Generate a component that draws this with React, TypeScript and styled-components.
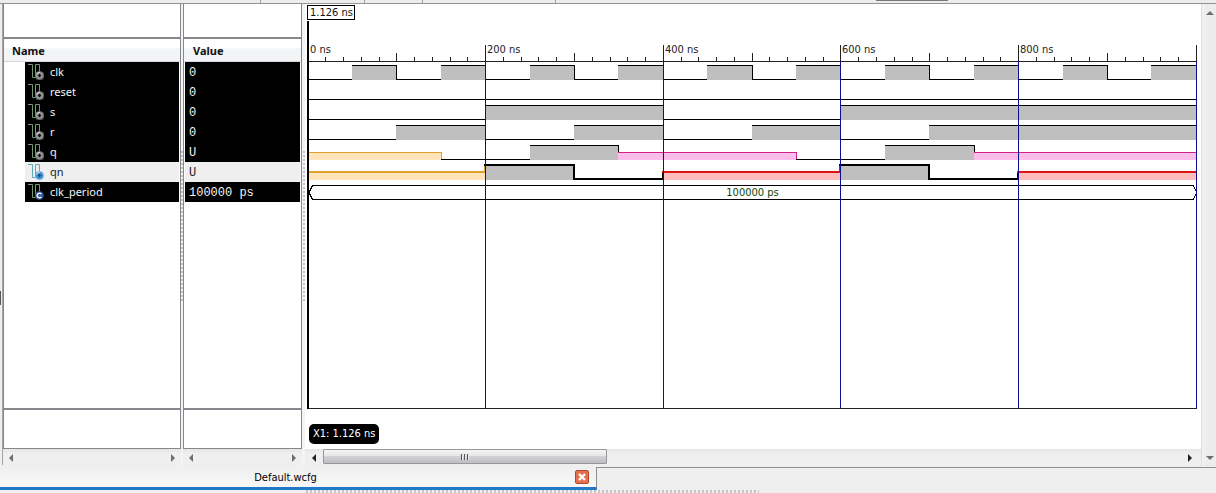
import React, { useLayoutEffect, useRef, useState } from "react";
import styled, { createGlobalStyle } from "styled-components";

const UI = `"Noto Sans", "Open Sans", sans-serif`;
const TAHOMA = `"DejaVu Sans Condensed", "Noto Sans", sans-serif`;
const MONO = `"Liberation Mono", monospace`;
const FRAME = "#86878c";

const Global = createGlobalStyle`
  * { box-sizing: border-box; }
  body { margin: 0; background: #efefef; font: 11px/14px ${UI}; color: #111; }
  button { font: inherit; padding: 0; border: 0; background: none; }
`;

const Page = styled.div`
  display: flex;
  flex-direction: column;
  height: 100vh;
  min-height: 400px;
  overflow: hidden;
`;

const ToolbarEdge = styled.div`
  display: flex;
  flex: none;
  height: 4px;
  background: #ececec;
  border-bottom: 1px solid #939396;
`;

const ToolbarGroup = styled.div<{ $width: number }>`
  width: ${(p) => p.$width}px;
  border-right: 1px solid #a3a3a6;
`;

const ToolbarShadow = styled.div`
  width: 72px;
  height: 1px;
  margin-left: 320px;
  background: #77777a;
`;

const Main = styled.main`
  display: flex;
  flex: 1;
  min-height: 0;
  padding-bottom: 1px;
`;

const Gutter = styled.div`
  display: flex;
  align-items: center;
  flex: none;
  width: 3px;
  margin-bottom: 1px;
  padding-top: 126px;
  border-right: 1px solid #a2a2a5;
`;

const GutterMark = styled.div`
  width: 1px;
  height: 14px;
  background: #555;
`;

const Splitter = styled.div<{ $width: number }>`
  display: flex;
  flex: none;
  align-items: center;
  justify-content: flex-end;
  width: ${(p) => p.$width}px;
  padding-bottom: 16px;
  background: #f4f4f4;

  &::after {
    content: "";
    width: 2px;
    height: 152px;
    background: repeating-linear-gradient(#c4c4c4 0 2px, #f4f4f4 2px 4px);
  }
`;

const Column = styled.section<{ $width: number }>`
  display: flex;
  flex: none;
  flex-direction: column;
  width: ${(p) => p.$width}px;
`;

const Spacer = styled.div<{ $height: number; $place: "top" | "bottom" }>`
  flex: none;
  height: ${(p) => p.$height}px;
  background: #fff;
  border: solid ${FRAME};
  border-width: ${(p) => (p.$place === "top" ? "0 1px 2px" : "1px")};
`;

const List = styled.div`
  flex: 1;
  min-height: 0;
  background: #fff;
  border: solid ${FRAME};
  border-width: 0 1px 1px;
`;

const Table = styled.table`
  width: 100%;
  table-layout: fixed;
  border-spacing: 0;
`;

const HeadCell = styled.th<{ $indent: number }>`
  height: 23px;
  padding: 2px 0 0 ${(p) => p.$indent}px;
  text-align: left;
  font-weight: 700;
  background: linear-gradient(#fff 0 40%, #f3f4f6 45% 100%);
  border-bottom: 1px solid #d6d7da;
`;

const Cell = styled.td<{ $indent: number }>`
  height: 20px;
  padding: 0 1px 0 ${(p) => p.$indent}px;
`;

const Signal = styled.div<{ $selected: boolean; $mono?: boolean }>`
  display: flex;
  align-items: center;
  gap: 6px;
  height: 20px;
  padding: ${(p) => (p.$mono ? "2px 0 0 4px" : "0 0 0 3px")};
  font: ${(p) => (p.$mono ? `12px/18px ${MONO}` : `11px/20px ${UI}`)};
  white-space: nowrap;
  color: ${(p) => (p.$selected ? "#1a1a22" : "#f4f4f4")};
  background: ${(p) => (p.$selected ? "#efefef" : "#000")};
`;

const Scroll = styled.div`
  display: flex;
  flex: none;
  align-items: center;
  height: 17px;
  background: linear-gradient(#e6e6e6, #efefef 30%);
`;

const Track = styled.div`
  flex: 1;
  height: 100%;
`;

const Thumb = styled.div`
  display: flex;
  align-items: center;
  justify-content: center;
  gap: 1px;
  width: 33%;
  height: 15px;
  margin-left: 1px;
  border: 1px solid #98989c;
  border-radius: 1px;
  background: linear-gradient(#f5f5f5, #e6e6e7 45%, #d2d2d5 50%, #bebec2);
`;

const Grip = styled.span`
  width: 2px;
  height: 6px;
  background: linear-gradient(90deg, #55555a 50%, #e8e8e8 50%);
`;

const ArrowButton = styled.button`
  display: flex;
  align-items: center;
  justify-content: center;
  flex: none;
  width: 16px;
  height: 17px;
`;

const Viewer = styled.section`
  display: flex;
  flex: 1;
  flex-direction: column;
  min-width: 0;
`;

const ViewerScroll = styled(Scroll)`
  padding: 0 3px 0 1px;
`;

const Canvas = styled.div`
  display: flex;
  flex: 1;
  flex-direction: column;
  min-height: 0;
  align-items: flex-start;
  background: #fff;
`;

const CursorTime = styled.div`
  height: 15px;
  margin: 1px 0 0 2px;
  padding: 0 1px 0 2px;
  border: 1px solid #000;
  font: 11px/13px ${TAHOMA};
  white-space: nowrap;
`;

const Chart = styled.svg`
  display: block;
  flex: 1 1 0;
  width: 100%;
  min-height: 200px;
  font: 11px ${TAHOMA};
`;

const Footer = styled.div`
  flex: none;
  height: 40px;
  padding: 15px 0 0 4px;
`;

const CursorPill = styled.div`
  height: 20px;
  padding: 0 4px;
  border-radius: 5px;
  background: #000;
  color: #fff;
  font: 11px/20px ${TAHOMA};
  white-space: nowrap;
`;

const VScroll = styled.div`
  display: flex;
  flex: none;
  flex-direction: column;
  justify-content: space-between;
  width: 15px;
  border-left: 1px solid #dedede;
  background: linear-gradient(90deg, #f2f2f2, #ececec 40%);
`;

const TabBar = styled.footer`
  display: flex;
  flex: none;
  flex-direction: column;
  height: 26px;
`;

const TabRow = styled.div`
  display: flex;
`;

const Tab = styled.div`
  display: flex;
  align-items: center;
  width: 597px;
  height: 23px;
  padding-right: 7px;
  border-right: 1px solid #8e8e92;
  border-bottom: 3px solid #1f78c9;
  background: linear-gradient(#efefef, #f8f8f8);
`;

const TabLabel = styled.button`
  flex: 1;
  height: 20px;
  padding: 1px 4px 0 0;
  font: 11px/20px ${TAHOMA};
  text-align: center;
`;

const TabRest = styled.div`
  flex: 1;
  border-top: 1px solid #8e8e92;
`;

const Close = styled.button`
  display: block;
  width: 14px;
  height: 14px;
`;

const DotStrip = styled.div`
  width: 453px;
  height: 3px;
  margin-left: 306px;
  background: repeating-linear-gradient(90deg, #c6c6c6 0 2px, #f0f0f0 2px 4px);
`;

type Dir = "left" | "right" | "up" | "down";
const ARROWS: Record<Dir, string> = {
  left: "M6 0v8L2 4z",
  right: "M2 0v8l4-4z",
  up: "M0 6h8L4 2z",
  down: "M0 2h8L4 6z",
};

function Arrow({ dir, color = "#6e6e72" }: { dir: Dir; color?: string }) {
  return (
    <ArrowButton aria-label={`Scroll ${dir}`}>
      <svg width="8" height="8" viewBox="0 0 8 8">
        <path d={ARROWS[dir]} fill={color} />
      </svg>
    </ArrowButton>
  );
}

type Kind = "port" | "selected" | "constant";

function SignalIcon({ kind }: { kind: Kind }) {
  const wave = kind === "selected" ? "#5fa9bd" : "#719a70";
  const disc = kind === "port" ? "#9a9a9a" : kind === "selected" ? "#3f8fd0" : "#3c5fa5";
  const rim = kind === "port" ? "#666869" : kind === "selected" ? "#7ab8e6" : "#26407c";
  return (
    <svg width="16" height="16" viewBox="0 0 16 16" aria-hidden="true">
      <path d="M0 .5h4.500v13h3V.5h4V7" fill="none" stroke={wave} />
      {kind === "port" && <path d="M8 8h7.500v7.500H8z" fill="#4b4b4b" />}
      <circle cx="11.500" cy="11.500" r="4" fill={disc} stroke={rim} />
      {kind === "constant" ? (
        <path d="M13.400 10a2.400 2.400 0 1 0 0 3" fill="none" stroke="#fff" strokeWidth="1.300" />
      ) : (
        <>
          <path d="M8.800 10.500a3 3 0 0 1 3-2.200" fill="none" stroke="#d8e4ea" />
          <path
            d="M11.500 9.800v3.400M9.800 11.500h3.400"
            stroke={kind === "selected" ? "#164f8c" : "#111"}
            strokeWidth="1.400"
          />
        </>
      )}
    </svg>
  );
}

const SIGNALS: { name: string; value: string; kind: Kind }[] = [
  { name: "clk", value: "0", kind: "port" },
  { name: "reset", value: "0", kind: "port" },
  { name: "s", value: "0", kind: "port" },
  { name: "r", value: "0", kind: "port" },
  { name: "q", value: "U", kind: "port" },
  { name: "qn", value: "U", kind: "selected" },
  { name: "clk_period", value: "100000 ps", kind: "constant" },
];

type Level = "0" | "1" | "U" | "X" | "R";
// Each step is [start time in ns, level]; it lasts until the next one.
type Trace = [number, Level][];

const TRACES: { steps: Trace; thick?: boolean }[] = [
  { steps: Array.from({ length: 20 }, (_, i) => [i * 50, i % 2 ? "1" : "0"] as [number, Level]) },
  { steps: [[0, "0"]] },
  { steps: [[0, "0"], [200, "1"], [400, "0"], [600, "1"]] },
  { steps: [[0, "0"], [100, "1"], [200, "0"], [300, "1"], [400, "0"], [500, "1"], [600, "0"], [700, "1"]] },
  { steps: [[0, "U"], [150, "0"], [250, "1"], [350, "X"], [550, "0"], [650, "1"], [750, "X"]] },
  { thick: true, steps: [[0, "U"], [200, "1"], [300, "0"], [400, "R"], [600, "1"], [700, "0"], [800, "R"]] },
];

const LOOK: Record<Level, { line: string; fill: string; drop: number }> = {
  "0": { line: "#000", fill: "none", drop: 14 },
  "1": { line: "#000", fill: "#bfbfbf", drop: 0 },
  U: { line: "#dfa02c", fill: "#ffe4b9", drop: 7 },
  X: { line: "#d0208c", fill: "#fdbdea", drop: 7 },
  R: { line: "#dc1414", fill: "#ffbcbc", drop: 7 },
};

const ROW = 20;
const AXIS = 41;
const FIRST = 45;

function WaveChart() {
  const ref = useRef<SVGSVGElement>(null);
  const [size, setSize] = useState({ w: 896, h: 389 });

  useLayoutEffect(() => {
    const el = ref.current;
    if (!el) return;
    const measure = () => {
      const r = el.getBoundingClientRect();
      setSize({ w: Math.round(r.width), h: Math.round(r.height) });
    };
    measure();
    const watch = new ResizeObserver(measure);
    watch.observe(el);
    return () => watch.disconnect();
  }, []);

  const at = (t: number) => Math.round(2.5 + (t * (size.w - 7.7)) / 1000);
  const end = at(1000);
  const bottom = size.h - 1;
  const busTop = FIRST + 6 * ROW;

  return (
    <Chart ref={ref} shapeRendering="crispEdges" role="img" aria-label="Signal waveforms">
      {TRACES.map(({ steps, thick }, row) => {
        const top = FIRST + row * ROW;
        const t = thick ? 2 : 1;
        const lift = t - 1;
        return (
          <g key={row}>
            {steps.map(([start, level], i) => {
              const x0 = at(start);
              const next = steps[i + 1];
              const x1 = next ? at(next[0]) : end;
              const { line, fill, drop } = LOOK[level];
              const y = top + drop - lift;
              const nextY = next ? top + LOOK[next[1]].drop - lift : y;
              const left = i === 0 ? x0 : x0 - lift;
              return (
                <g key={start}>
                  {fill !== "none" && (
                    <rect x={x0} y={y} width={x1 - x0} height={top + 15 - y} fill={fill} />
                  )}
                  <rect x={left} y={y} width={x1 + 1 - left} height={t} fill={line} />
                  {next && (
                    <rect
                      x={x1 - lift}
                      y={Math.min(y, nextY)}
                      width={t}
                      height={Math.abs(nextY - y) + t}
                      fill={line}
                    />
                  )}
                </g>
              );
            })}
          </g>
        );
      })}

      <path
        d={`M7.500 ${busTop + 0.5}H${end - 2.5}L${end + 0.5} ${busTop + 7.5}L${end - 2.5} ${busTop + 14.5}H7.500L4 ${busTop + 7.5}z`}
        fill="none"
        stroke="#000"
      />
      <text x={(end + 4) / 2} y={busTop + 11} textAnchor="middle" fill="#0c480c">
        100000 ps
      </text>

      {Array.from({ length: 50 }, (_, i) => (i + 1) * 20).map((t) => {
        const len = t % 200 === 0 ? 16 : t % 100 === 0 ? 8 : 4;
        return <rect key={t} x={at(t)} y={AXIS - len} width="1" height={len} fill="#222" />;
      })}
      <rect x="3" y={AXIS} width={end - 2} height="1" fill="#222" />
      <rect x="3" y={bottom} width={end - 2} height="1" fill="#222" />
      {[200, 400, 600, 800, 1000].map((t) => (
        <rect key={t} x={at(t)} y={AXIS} width="1" height={bottom - AXIS} fill="#0d0d94" />
      ))}
      {[0, 200, 400, 600, 800].map((t) => (
        <text key={t} x={at(t) + 2} y="33" fill="#222">
          {t} ns
        </text>
      ))}
      <rect x="2" y="1" width="2" height={bottom} fill="#000" />
    </Chart>
  );
}

function ListColumn({ title, width }: { title: "Name" | "Value"; width: number }) {
  const isName = title === "Name";
  return (
    <Column $width={width}>
      <Spacer $height={35} $place="top" />
      <List>
        <Table>
          <thead>
            <tr>
              <HeadCell $indent={isName ? 8 : 9} scope="col">{title}</HeadCell>
            </tr>
          </thead>
          <tbody>
            {SIGNALS.map((s) => (
              <tr key={s.name}>
                <Cell $indent={isName ? 21 : 1}>
                  <Signal $selected={s.kind === "selected"} $mono={!isName}>
                    {isName && <SignalIcon kind={s.kind} />}
                    {isName ? s.name : s.value}
                  </Signal>
                </Cell>
              </tr>
            ))}
          </tbody>
        </Table>
      </List>
      <Spacer $height={40} $place="bottom" />
      <Scroll>
        <Arrow dir="left" />
        <Track />
        <Arrow dir="right" />
      </Scroll>
    </Column>
  );
}

export default function App() {
  return (
    <Page>
      <Global />
      <ToolbarEdge>
        <ToolbarGroup $width={261} />
        <ToolbarGroup $width={104} />
        <ToolbarGroup $width={58} />
        <ToolbarGroup $width={133} />
        <ToolbarShadow />
      </ToolbarEdge>
      <Main>
        <Gutter>
          <GutterMark />
        </Gutter>
        <ListColumn title="Name" width={178} />
        <Splitter $width={2} />
        <ListColumn title="Value" width={119} />
        <Splitter $width={3} />
        <Viewer>
          <Canvas>
            <CursorTime>1.126 ns</CursorTime>
            <WaveChart />
            <Footer>
              <CursorPill>X1: 1.126 ns</CursorPill>
            </Footer>
          </Canvas>
          <ViewerScroll>
            <Arrow dir="left" color="#222" />
            <Track>
              <Thumb>
                <Grip />
                <Grip />
                <Grip />
              </Thumb>
            </Track>
            <Arrow dir="right" color="#222" />
          </ViewerScroll>
        </Viewer>
        <VScroll>
          <Arrow dir="up" />
          <Arrow dir="down" />
        </VScroll>
      </Main>
      <TabBar>
        <TabRow>
          <Tab>
            <TabLabel>Default.wcfg</TabLabel>
            <Close aria-label="Close Default.wcfg">
              <svg width="14" height="14" viewBox="0 0 14 14">
                <rect x=".5" y=".5" width="13" height="13" rx="1.500" fill="#e2714f" stroke="#b5482c" />
                <path d="M4 4l6 6M10 4l-6 6" stroke="#fff" strokeWidth="2.400" />
              </svg>
            </Close>
          </Tab>
          <TabRest />
        </TabRow>
        <DotStrip />
      </TabBar>
    </Page>
  );
}
